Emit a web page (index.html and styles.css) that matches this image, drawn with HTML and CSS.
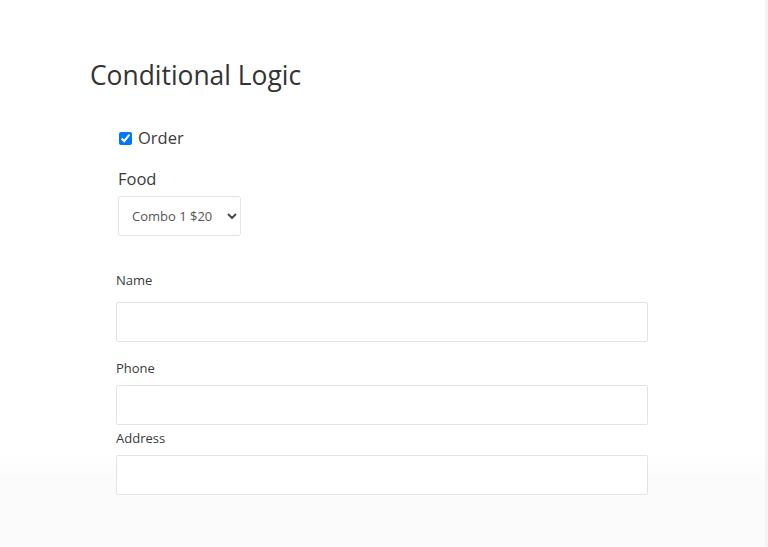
FILE: index.html
```html
<!DOCTYPE html>
<html>
<head>
<meta charset="utf-8">
<link rel="stylesheet" href="styles.css">
</head>
<body>
<div class="page">
  <main class="content">
    <h1 class="title">Conditional Logic</h1>
    <div class="group">
      <label class="check"><input type="checkbox" checked> <span>Order</span></label>
      <div class="food">
        <div class="food-label">Food</div>
        <div class="select">
          <span>Combo 1 $20</span>
          <svg class="chev" width="10" height="7" viewBox="0 0 10 7"><path d="M1.5 1.5 L5 5 L8.5 1.5" fill="none" stroke="#444" stroke-width="1.8" stroke-linecap="round" stroke-linejoin="round"/></svg>
        </div>
      </div>
    </div>
    <form class="fields">
      <label class="lbl lbl-name">Name</label>
      <div class="input"></div>
      <label class="lbl lbl-phone">Phone</label>
      <div class="input"></div>
      <label class="lbl lbl-addr">Address</label>
      <div class="input"></div>
    </form>
  </main>
  <div class="edge"></div>
</div>
</body>
</html>
```
FILE: styles.css
```css
html, body {
  margin: 0;
  padding: 0;
}
body {
  width: 768px;
  height: 547px;
  overflow: hidden;
  font-family: "Open Sans", "Noto Sans", sans-serif;
  color: #3a3a3a;
  background: linear-gradient(#ffffff 0, #ffffff 455px, #fbfbfb 480px, #fbfbfb 547px);
}
.page {
  display: flex;
  height: 547px;
}
.content {
  flex: 1;
  padding: 57px 0 0 90px;
}
.edge {
  width: 3px;
  background: #f3f3f3;
}
.title {
  margin: 0;
  font-weight: 400;
  font-size: 26.4px;
  line-height: 36px;
  color: #333;
  letter-spacing: 0;
}
.group {
  padding: 33px 0 0 28px;
}
.check {
  display: flex;
  align-items: center;
  font-size: 16.5px;
  line-height: 24px;
  color: #3a3a3a;
}
.check input {
  width: 13px;
  height: 13px;
  margin: 0 6px 0 1px;
  accent-color: #0075ff;
}
.food {
  padding-top: 17px;
}
.food-label {
  font-size: 16.5px;
  line-height: 24px;
  color: #3a3a3a;
}
.select {
  margin-top: 5px;
  height: 38px;
  border: 1px solid #e4e4e4;
  border-radius: 3px;
  display: flex;
  align-items: center;
  justify-content: space-between;
  padding: 0 3px 0 13px;
  box-sizing: content-box;
  width: 105px;
  font-size: 13px;
  color: #555;
}
.fields {
  display: flex;
  flex-direction: column;
  padding: 35px 0 0 26px;
  width: 532px;
}
.lbl {
  font-size: 13px;
  line-height: 18px;
  color: #3a3a3a;
}
.lbl-name { margin-bottom: 13px; }
.lbl-phone { margin-top: 17px; margin-bottom: 8px; }
.lbl-addr { margin-top: 4px; margin-bottom: 8px; }
.input {
  height: 38px;
  border: 1px solid #e3e3e3;
  border-radius: 2px;
  background: #fff;
}
```
